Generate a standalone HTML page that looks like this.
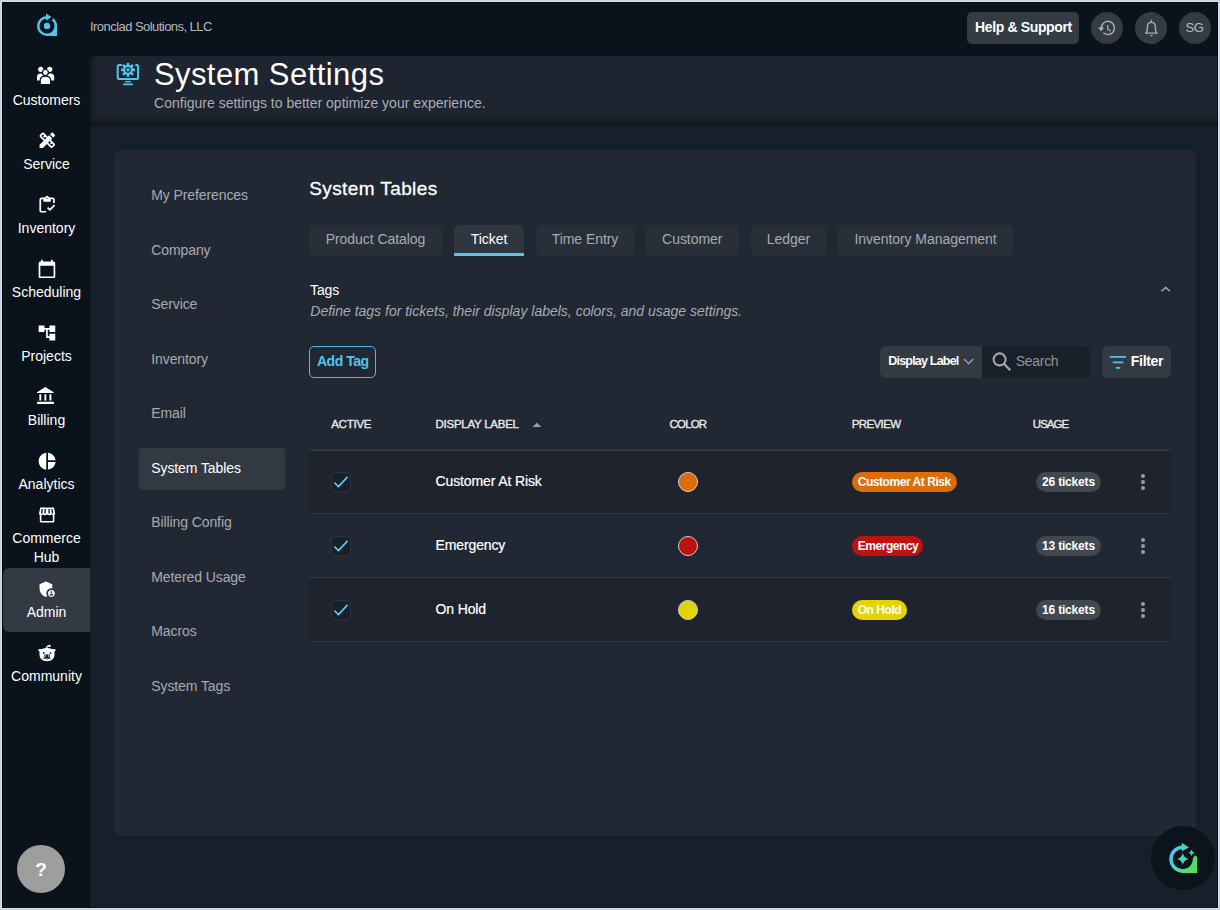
<!DOCTYPE html>
<html><head><meta charset="utf-8">
<style>
*{box-sizing:border-box;margin:0;padding:0}
html,body{width:1220px;height:910px;overflow:hidden;background:#c9d4de;font-family:"Liberation Sans",sans-serif;position:relative}
.abs{position:absolute;display:block}
.t{position:absolute;white-space:nowrap}
</style></head>
<body>
<div class="abs" style="left:1px;top:1px;width:1218px;height:908px;background:#d5dfe8;border-radius:0;"></div>
<div class="abs" style="left:2px;top:2px;width:1216px;height:906px;background:#0a131c;border-radius:0;"></div>
<div class="abs" style="left:90px;top:56px;width:1128px;height:852px;background:#16202a;border-radius:6px 0 0 0;"></div>
<div class="abs" style="left:90px;top:56px;width:1128px;height:70px;background:#1e2430;border-radius:6px 0 0 0;box-shadow:inset 0 -9px 8px -5px rgba(0,0,0,.45), inset 7px 0 7px -5px rgba(0,0,0,.3);"></div>
<div class="abs" style="left:114px;top:150px;width:1082px;height:686px;background:#222833;border-radius:6px;"></div>
<svg class="abs" style="left:30px;top:8px;" width="34" height="34" viewBox="30 8 34 34">
<path d="M47 17.2 A8.8 8.8 0 1 0 55.8 26 A8.8 8.8 0 0 0 52.6 19.3" fill="none" stroke="#4fc6ee" stroke-width="2.5"/>
<path d="M57.05 25.5 L57.05 36 L46.5 36 L46.5 34.6 A8.6 8.6 0 0 0 55.6 25.5Z" fill="#4fc6ee"/>
<circle cx="47" cy="25.9" r="3.2" fill="#4fc6ee"/>
<path d="M46 13.4 L51.6 16.9 L46 20.4Z" fill="#4fc6ee"/>
</svg>
<div class="t" style="left:90px;top:20.20px;font-size:13px;line-height:13px;color:#b4b9bf;letter-spacing:-0.55px;">Ironclad Solutions, LLC</div>
<div class="abs" style="left:967px;top:12px;width:112px;height:32px;background:#353b43;border-radius:5px;"></div>
<div class="t" style="left:975px;top:20.15px;font-size:14px;line-height:14px;color:#fff;font-weight:700;letter-spacing:-0.36px;">Help &amp; Support</div>
<div class="abs" style="left:1091px;top:12px;width:32px;height:32px;background:#353b43;border-radius:50%;"></div>
<div class="abs" style="left:1135px;top:12px;width:32px;height:32px;background:#353b43;border-radius:50%;"></div>
<div class="abs" style="left:1179px;top:12px;width:32px;height:32px;background:#353b43;border-radius:50%;"></div>
<div class="t" style="left:1185.5px;top:21.00px;font-size:13px;line-height:13px;color:#b8bcc2;letter-spacing:-0.3px;">SG</div>
<div class="abs" style="left:3px;top:568px;width:87px;height:64px;background:#333a44;border-radius:6px 0 0 6px;"></div>
<div class="t" style="left:2.5px;width:88px;text-align:center;top:93.15px;font-size:14px;line-height:14px;color:#ffffff;">Customers</div>
<div class="t" style="left:2.5px;width:88px;text-align:center;top:157.15px;font-size:14px;line-height:14px;color:#ffffff;">Service</div>
<div class="t" style="left:2.5px;width:88px;text-align:center;top:221.15px;font-size:14px;line-height:14px;color:#ffffff;">Inventory</div>
<div class="t" style="left:2.5px;width:88px;text-align:center;top:285.15px;font-size:14px;line-height:14px;color:#ffffff;">Scheduling</div>
<div class="t" style="left:2.5px;width:88px;text-align:center;top:349.15px;font-size:14px;line-height:14px;color:#ffffff;">Projects</div>
<div class="t" style="left:2.5px;width:88px;text-align:center;top:413.15px;font-size:14px;line-height:14px;color:#ffffff;">Billing</div>
<div class="t" style="left:2.5px;width:88px;text-align:center;top:477.15px;font-size:14px;line-height:14px;color:#ffffff;">Analytics</div>
<div class="t" style="left:2.5px;width:88px;text-align:center;top:530.95px;font-size:14px;line-height:14px;color:#ffffff;">Commerce</div>
<div class="t" style="left:2.5px;width:88px;text-align:center;top:550.05px;font-size:14px;line-height:14px;color:#ffffff;">Hub</div>
<div class="t" style="left:2.5px;width:88px;text-align:center;top:604.65px;font-size:14px;line-height:14px;color:#ffffff;">Admin</div>
<div class="t" style="left:2.5px;width:88px;text-align:center;top:668.75px;font-size:14px;line-height:14px;color:#ffffff;">Community</div>
<svg class="abs" style="left:30px;top:60px;" width="34" height="30" viewBox="30 60 34 30">
<circle cx="40.7" cy="69.3" r="2.6" fill="#fff"/>
<circle cx="49.7" cy="69.3" r="2.6" fill="#fff"/>
<path d="M37 80.4 V77 Q37 73.8 40.5 73.6 Q42.5 73.6 44 74.6 V80.4Z" fill="#fff"/>
<path d="M54.2 80.4 V77 Q54.2 73.8 50.7 73.6 Q48.7 73.6 47.2 74.6 V80.4Z" fill="#fff"/>
<circle cx="45.4" cy="72.5" r="3.0" fill="#fff" stroke="#0a131c" stroke-width="1.2"/>
<path d="M40.2 84.6 V80.5 Q40.2 76.2 45.4 76.2 Q50.6 76.2 50.6 80.5 V84.6Z" fill="#fff" stroke="#0a131c" stroke-width="1.2"/>
</svg>
<svg class="abs" style="left:0px;top:0px;left:36.72px;top:130.42px;width:20.64px;height:20.64px" width="24" height="24" viewBox="0 0 24 24"><path fill="#fff" d="M16.24 11.51l1.57-1.57-3.75-3.75-1.57 1.57-4.14-4.13c-.78-.78-2.05-.78-2.83 0l-1.9 1.9c-.78.78-.78 2.05 0 2.83l4.13 4.13L3 17.25V21h3.75l4.76-4.76 4.13 4.13c.95.95 2.23.6 2.83 0l1.9-1.9c.78-.78.78-2.05 0-2.83l-4.13-4.13zm-7.06-.44L5.04 6.94l1.89-1.9L8.2 6.31 7.02 7.5l1.41 1.41 1.19-1.19 1.45 1.45-1.89 1.9zm7.88 7.89l-4.13-4.14 1.9-1.9 1.45 1.45-1.19 1.19 1.41 1.41 1.19-1.19 1.27 1.27-1.9 1.91zM20.71 7.04c.39-.39.39-1.02 0-1.41l-2.34-2.34c-.47-.47-1.12-.29-1.41 0l-1.83 1.83 3.75 3.75 1.83-1.83z"/></svg>
<svg class="abs" style="left:30px;top:190px;" width="34" height="30" viewBox="30 190 34 30">
<path d="M46.1 211.75 H41.6 Q40.25 211.75 40.25 210.4 V199.7 Q40.25 198.35 41.6 198.35 H43.5 M50.5 198.35 H52.5 Q53.9 198.35 53.9 199.7 V203" fill="none" stroke="#fff" stroke-width="1.7"/>
<path d="M43.2 198.3 Q43.2 197.3 44.2 197.3 H45.3 Q45.6 195.7 47.05 195.7 Q48.5 195.7 48.8 197.3 H49.9 Q50.9 197.3 50.9 198.3 V200.8 Q50.9 201.8 49.9 201.8 H44.2 Q43.2 201.8 43.2 200.8 Z" fill="#fff"/>
<circle cx="47.05" cy="198.3" r="0.65" fill="#0a121b"/>
<path d="M47.6 207.6 L49.9 209.9 L54.6 205.2" fill="none" stroke="#fff" stroke-width="1.7"/>
</svg>
<svg class="abs" style="left:0px;top:0px;left:37.04px;top:258.87px;width:19.92px;height:19.92px" width="24" height="24" viewBox="0 0 24 24"><path fill="#fff" d="M20 3h-1V1h-2v2H7V1H5v2H4c-1.1 0-2 .9-2 2v16c0 1.1.9 2 2 2h16c1.1 0 2-.9 2-2V5c0-1.1-.9-2-2-2zm0 18H4V8h16v13z"/></svg>
<svg class="abs" style="left:0px;top:0px;left:37.04px;top:322.8px;width:19.92px;height:19.92px" width="24" height="24" viewBox="0 0 24 24"><path fill="#fff" d="M22 11V3h-7v3H9V3H2v8h7V8h2v10h4v3h7v-8h-7v3h-2V8h2v3z"/></svg>
<svg class="abs" style="left:30px;top:380px;" width="34" height="30" viewBox="30 380 34 30">
<path d="M45.35 386.9 L37 392.2 Q36.8 393.1 37.6 393.1 H53.1 Q53.9 393.1 53.7 392.2Z" fill="#fff"/>
<rect x="39.35" y="394.3" width="1.9" height="6.2" fill="#fff"/>
<rect x="44.4" y="394.3" width="1.9" height="6.2" fill="#fff"/>
<rect x="49.45" y="394.3" width="1.9" height="6.2" fill="#fff"/>
<rect x="37" y="401.8" width="17" height="2.3" rx="0.5" fill="#fff"/>
</svg>
<svg class="abs" style="left:0px;top:0px;left:36.81px;top:450.81px;width:20.28px;height:20.28px" width="24" height="24" viewBox="0 0 24 24"><path fill="#fff" d="M11 2v20c-5.07-.5-9-4.79-9-10s3.93-9.5 9-10zm2.03 0v8.99H22c-.47-4.74-4.24-8.52-8.97-8.99zm0 11.01V22c4.74-.47 8.5-4.25 8.97-8.99h-8.97z"/></svg>
<svg class="abs" style="left:30px;top:500px;" width="34" height="30" viewBox="30 500 34 30">
<path d="M40.6 514.8 V521 Q40.6 521.7 41.3 521.7 H52.9 Q53.6 521.7 53.6 521 V514.8" fill="none" stroke="#fff" stroke-width="1.6"/>
<path d="M40.2 507.5 H54 L55.1 513.8 Q55.1 515.2 53.6 515.2 Q52.3 515.2 51.5 514.4 Q50.6 515.2 49.3 515.2 Q48 515.2 47.1 514.4 Q46.2 515.2 44.9 515.2 Q43.6 515.2 42.7 514.4 Q41.9 515.2 40.6 515.2 Q39 515.2 39 513.8 Z" fill="#fff"/>
<path d="M41.6 509 L42.8 509 L42.4 513.6 L41 513.6Z M44.6 509 L45.8 509 L45.6 513.6 L44.2 513.6Z M48.3 509 L49.5 509 L49.9 513.6 L48.5 513.6Z M51.4 509 L52.6 509 L53.2 513.6 L51.8 513.6Z" fill="#0a121b"/>
</svg>
<svg class="abs" style="left:0px;top:0px;left:36.75px;top:578.65px;width:20.4px;height:20.4px" width="24" height="24" viewBox="0 0 24 24"><path fill="#fff" d="M17 11c.34 0 .67.04 1 .09V6.27L10.5 3 3 6.27v4.91c0 4.54 3.2 8.79 7.5 9.82.55-.13 1.08-.32 1.6-.55-.69-.98-1.1-2.17-1.1-3.45 0-3.31 2.69-6 6-6z"/><path fill="#fff" d="M17 13c-2.21 0-4 1.79-4 4s1.79 4 4 4 4-1.79 4-4-1.79-4-4-4zm0 1.38c.62 0 1.12.51 1.12 1.12s-.51 1.12-1.12 1.12-1.12-.51-1.12-1.12.5-1.12 1.12-1.12zm0 5.37c-.93 0-1.74-.46-2.24-1.17.05-.72 1.51-1.08 2.24-1.08s2.19.36 2.24 1.08c-.5.71-1.31 1.17-2.24 1.17z"/></svg>
<svg class="abs" style="left:30px;top:640px;" width="34" height="26" viewBox="30 640 34 26">
<path d="M38 649.7 Q39.5 648.8 41.5 649.3 Q44 648 47 648 Q50 648 52.5 649.3 Q54.5 648.8 55.9 649.7 Q55.3 651.3 54.3 652 Q54.6 653 54.6 654 Q54.6 661.3 47 661.3 Q39.4 661.3 39.4 654 Q39.4 653 39.7 652 Q38.7 651.3 38 649.7Z" fill="#fff"/>
<path d="M46.2 648.5 Q47 645.6 49.6 645.6" fill="none" stroke="#fff" stroke-width="1.2"/>
<circle cx="49.6" cy="645.9" r="1.1" fill="#fff"/>
<rect x="42.9" y="652.2" width="1.6" height="1.6" fill="#0a121b"/>
<rect x="49.7" y="652.2" width="1.6" height="1.6" fill="#0a121b"/>
<path d="M44.3 654.6 H49.8 V657.4 Q47 658.4 44.3 657.4Z" fill="#0a121b"/>
<rect x="45.2" y="655.2" width="0.9" height="1.5" fill="#fff"/>
<rect x="48.0" y="655.2" width="0.9" height="1.5" fill="#fff"/>
<path d="M43.2 658 Q47 660 50.8 658" fill="none" stroke="#0a121b" stroke-width="0.8"/>
</svg>
<div class="abs" style="left:17px;top:845px;width:48px;height:48px;background:#9e9e9e;border-radius:50%;"></div>
<div class="t" style="left:17.0px;width:48px;text-align:center;top:860.12px;font-size:19px;line-height:19px;color:#fff;font-weight:700;">?</div>
<svg class="abs" style="left:110px;top:56px;" width="36" height="36" viewBox="110 56 36 36">
<path d="M121.9 65.1 H119.2 Q117.7 65.1 117.7 66.6 V77.5 Q117.7 79 119.2 79 H136.6 Q138.1 79 138.1 77.5 V66.6 Q138.1 65.1 136.6 65.1 H135.3" fill="none" stroke="#4fc6ee" stroke-width="2"/>
<rect x="125.2" y="81" width="5.5" height="1.5" fill="#4fc6ee"/>
<rect x="123" y="83.5" width="10.1" height="1.7" rx="0.8" fill="#4fc6ee"/>
<g transform="translate(128 69.85)">
<circle r="5.1" fill="#4fc6ee"/><rect x="-1.25" y="-7" width="2.5" height="3" transform="rotate(0)" fill="#4fc6ee"/><rect x="-1.25" y="-7" width="2.5" height="3" transform="rotate(45)" fill="#4fc6ee"/><rect x="-1.25" y="-7" width="2.5" height="3" transform="rotate(90)" fill="#4fc6ee"/><rect x="-1.25" y="-7" width="2.5" height="3" transform="rotate(135)" fill="#4fc6ee"/><rect x="-1.25" y="-7" width="2.5" height="3" transform="rotate(180)" fill="#4fc6ee"/><rect x="-1.25" y="-7" width="2.5" height="3" transform="rotate(225)" fill="#4fc6ee"/><rect x="-1.25" y="-7" width="2.5" height="3" transform="rotate(270)" fill="#4fc6ee"/><rect x="-1.25" y="-7" width="2.5" height="3" transform="rotate(315)" fill="#4fc6ee"/>
<circle r="2.9" fill="#1e232d"/>
<circle r="1.7" fill="#4fc6ee"/>
</g>
</svg>
<div class="t" style="left:153.9px;top:58.76px;font-size:31px;line-height:31px;color:#fff;letter-spacing:0.43px;">System Settings</div>
<div class="t" style="left:154.1px;top:95.75px;font-size:14px;line-height:14px;color:#a9aeb4;">Configure settings to better optimize your experience.</div>
<div class="abs" style="left:139px;top:448px;width:146px;height:42px;background:#333942;border-radius:4px;"></div>
<div class="t" style="left:151.3px;top:188.15px;font-size:14px;line-height:14px;color:#a6abb2;letter-spacing:-0.1px;">My Preferences</div>
<div class="t" style="left:151.3px;top:242.65px;font-size:14px;line-height:14px;color:#a6abb2;letter-spacing:-0.1px;">Company</div>
<div class="t" style="left:151.3px;top:297.15px;font-size:14px;line-height:14px;color:#a6abb2;letter-spacing:-0.1px;">Service</div>
<div class="t" style="left:151.3px;top:351.65px;font-size:14px;line-height:14px;color:#a6abb2;letter-spacing:-0.1px;">Inventory</div>
<div class="t" style="left:151.3px;top:406.15px;font-size:14px;line-height:14px;color:#a6abb2;letter-spacing:-0.1px;">Email</div>
<div class="t" style="left:151.3px;top:460.65px;font-size:14px;line-height:14px;color:#fff;letter-spacing:-0.1px;">System Tables</div>
<div class="t" style="left:151.3px;top:515.15px;font-size:14px;line-height:14px;color:#a6abb2;letter-spacing:-0.1px;">Billing Config</div>
<div class="t" style="left:151.3px;top:569.65px;font-size:14px;line-height:14px;color:#a6abb2;letter-spacing:-0.1px;">Metered Usage</div>
<div class="t" style="left:151.3px;top:624.15px;font-size:14px;line-height:14px;color:#a6abb2;letter-spacing:-0.1px;">Macros</div>
<div class="t" style="left:151.3px;top:678.65px;font-size:14px;line-height:14px;color:#a6abb2;letter-spacing:-0.1px;">System Tags</div>
<div class="t" style="left:309.2px;top:178.62px;font-size:19px;line-height:19px;color:#fff;letter-spacing:0.4px;-webkit-text-stroke:0.3px #fff;">System Tables</div>
<div class="abs" style="left:309px;top:225px;width:133px;height:31px;background:#292f39;border-radius:6px;"></div>
<div class="t" style="left:299.0px;width:153px;text-align:center;top:231.95px;font-size:14px;line-height:14px;color:#a6abb2;letter-spacing:-0.05px;">Product Catalog</div>
<div class="abs" style="left:454px;top:225px;width:70px;height:31px;background:#30363f;border-radius:6px 6px 0 0;"></div>
<div class="abs" style="left:454px;top:253px;width:70px;height:3px;background:#4fc6ee;border-radius:0;"></div>
<div class="t" style="left:444.0px;width:90px;text-align:center;top:231.95px;font-size:14px;line-height:14px;color:#fff;letter-spacing:-0.05px;">Ticket</div>
<div class="abs" style="left:536px;top:225px;width:98px;height:31px;background:#292f39;border-radius:6px;"></div>
<div class="t" style="left:526.0px;width:118px;text-align:center;top:231.95px;font-size:14px;line-height:14px;color:#a6abb2;letter-spacing:-0.05px;">Time Entry</div>
<div class="abs" style="left:646px;top:225px;width:92.5px;height:31px;background:#292f39;border-radius:6px;"></div>
<div class="t" style="left:636.0px;width:112.5px;text-align:center;top:231.95px;font-size:14px;line-height:14px;color:#a6abb2;letter-spacing:-0.05px;">Customer</div>
<div class="abs" style="left:751px;top:225px;width:75px;height:31px;background:#292f39;border-radius:6px;"></div>
<div class="t" style="left:741.0px;width:95px;text-align:center;top:231.95px;font-size:14px;line-height:14px;color:#a6abb2;letter-spacing:-0.05px;">Ledger</div>
<div class="abs" style="left:838px;top:225px;width:175px;height:31px;background:#292f39;border-radius:6px;"></div>
<div class="t" style="left:828.0px;width:195px;text-align:center;top:231.95px;font-size:14px;line-height:14px;color:#a6abb2;letter-spacing:-0.05px;">Inventory Management</div>
<div class="t" style="left:310px;top:283.15px;font-size:14px;line-height:14px;color:#fff;letter-spacing:-0.1px;">Tags</div>
<div class="t" style="left:310.3px;top:303.85px;font-size:14px;line-height:14px;color:#a6abb2;font-style:italic;">Define tags for tickets, their display labels, colors, and usage settings.</div>
<svg class="abs" style="left:1155px;top:282px;" width="20" height="14" viewBox="1155 282 20 14"><path d="M1161.4 291.3 L1165.7 287.6 L1170 291.3" fill="none" stroke="#a3a7ac" stroke-width="1.5"/></svg>
<div class="abs" style="left:309px;top:346px;width:67px;height:32px;background:transparent;border-radius:5px;border:1px solid #48bde3;"></div>
<div class="t" style="left:316.9px;top:354.15px;font-size:14px;line-height:14px;color:#4fc6ee;font-weight:700;letter-spacing:-0.45px;">Add Tag</div>
<div class="abs" style="left:880px;top:346px;width:102px;height:32px;background:#343a43;border-radius:6px 0 0 6px;"></div>
<div class="t" style="left:888.3px;top:354.82px;font-size:12.5px;line-height:12.5px;color:#fff;font-weight:700;letter-spacing:-0.8px;">Display Label</div>
<svg class="abs" style="left:960px;top:354px;" width="18" height="14" viewBox="960 354 18 14"><path d="M964 359 L968.6 363.6 L973.2 359" fill="none" stroke="#a3a7ac" stroke-width="1.3"/></svg>
<div class="abs" style="left:982px;top:346px;width:108px;height:32px;background:#19202a;border-radius:0 6px 6px 0;"></div>
<svg class="abs" style="left:986px;top:348px;" width="28" height="28" viewBox="986 348 28 28"><circle cx="999.6" cy="359.4" r="6" fill="none" stroke="#a3a7ac" stroke-width="2.1"/><path d="M1004 363.8 L1010.2 370.2" stroke="#a3a7ac" stroke-width="2.3"/></svg>
<div class="t" style="left:1015.8px;top:354.15px;font-size:14px;line-height:14px;color:#8f949a;letter-spacing:-0.3px;">Search</div>
<div class="abs" style="left:1102px;top:346px;width:69px;height:32px;background:#343a43;border-radius:6px;"></div>
<svg class="abs" style="left:1106px;top:350px;" width="24" height="24" viewBox="1106 350 24 24"><path d="M1109.8 356.9 H1126.1 M1112.7 362.4 H1123.2 M1116 367.9 H1120.1" stroke="#4fc6ee" stroke-width="1.9"/></svg>
<div class="t" style="left:1130.8px;top:354.15px;font-size:14px;line-height:14px;color:#fff;font-weight:700;letter-spacing:-0.3px;">Filter</div>
<div class="t" style="left:331.2px;top:419.37px;font-size:11.5px;line-height:11.5px;color:#e8eaec;letter-spacing:-0.25px;-webkit-text-stroke:0.35px #e8eaec;">ACTIVE</div>
<div class="t" style="left:435.5px;top:419.37px;font-size:11.5px;line-height:11.5px;color:#e8eaec;letter-spacing:-0.25px;-webkit-text-stroke:0.35px #e8eaec;">DISPLAY LABEL</div>
<div class="t" style="left:669.6px;top:419.37px;font-size:11.5px;line-height:11.5px;color:#e8eaec;letter-spacing:-0.85px;-webkit-text-stroke:0.35px #e8eaec;">COLOR</div>
<div class="t" style="left:851.7px;top:419.37px;font-size:11.5px;line-height:11.5px;color:#e8eaec;letter-spacing:-0.6px;-webkit-text-stroke:0.35px #e8eaec;">PREVIEW</div>
<div class="t" style="left:1032.8px;top:419.37px;font-size:11.5px;line-height:11.5px;color:#e8eaec;letter-spacing:-0.95px;-webkit-text-stroke:0.35px #e8eaec;">USAGE</div>
<svg class="abs" style="left:528px;top:418px;" width="18" height="14" viewBox="528 418 18 14"><path d="M532.5 427.1 L536.9 422.8 L541.3 427.1Z" fill="#9ea2a7"/></svg>
<div class="abs" style="left:309px;top:449px;width:862px;height:2px;background:#30363f;border-radius:0;"></div>
<div class="abs" style="left:309px;top:451px;width:862px;height:63px;background:#1e232d;border-radius:0;"></div>
<div class="abs" style="left:309px;top:513px;width:862px;height:1px;background:#30363f;border-radius:0;"></div>
<div class="abs" style="left:331px;top:472px;width:20px;height:20px;background:#19202a;border-radius:3px;border:1px solid #2b323b;"></div>
<svg class="abs" style="left:328px;top:469px;" width="26" height="26" viewBox="328 469 26 26"><path d="M334.4 482.5 L338.4 486.5 L347.6 476.9" fill="none" stroke="#56cff4" stroke-width="1.7"/></svg>
<div class="t" style="left:435.5px;top:474.15px;font-size:14px;line-height:14px;color:#fff;letter-spacing:-0.12px;-webkit-text-stroke:0.2px #fff;">Customer At Risk</div>
<div class="abs" style="left:678px;top:472px;width:20px;height:20px;background:#dc6d0a;border-radius:50%;border:1px solid #cfcfcf;"></div>
<div class="abs" style="left:852px;top:472px;width:105px;height:20px;background:#dc6d0a;border-radius:10px;"></div>
<div class="t" style="left:857.7px;top:476.04px;font-size:12px;line-height:12px;color:#fff;font-weight:700;letter-spacing:-0.45px;">Customer At Risk</div>
<div class="abs" style="left:1036px;top:472px;width:65px;height:20px;background:#424852;border-radius:10px;"></div>
<div class="t" style="left:1042px;top:476.04px;font-size:12px;line-height:12px;color:#fff;font-weight:700;letter-spacing:-0.18px;">26 tickets</div>
<div class="abs" style="left:1141px;top:474px;width:4.2px;height:4.2px;background:#9a9ea4;border-radius:50%;"></div>
<div class="abs" style="left:1141px;top:480px;width:4.2px;height:4.2px;background:#9a9ea4;border-radius:50%;"></div>
<div class="abs" style="left:1141px;top:486px;width:4.2px;height:4.2px;background:#9a9ea4;border-radius:50%;"></div>
<div class="abs" style="left:309px;top:577px;width:862px;height:1px;background:#30363f;border-radius:0;"></div>
<div class="abs" style="left:331px;top:536px;width:20px;height:20px;background:#19202a;border-radius:3px;border:1px solid #2b323b;"></div>
<svg class="abs" style="left:328px;top:533px;" width="26" height="26" viewBox="328 533 26 26"><path d="M334.4 546.5 L338.4 550.5 L347.6 540.9" fill="none" stroke="#56cff4" stroke-width="1.7"/></svg>
<div class="t" style="left:435.5px;top:538.15px;font-size:14px;line-height:14px;color:#fff;letter-spacing:-0.12px;-webkit-text-stroke:0.2px #fff;">Emergency</div>
<div class="abs" style="left:678px;top:536px;width:20px;height:20px;background:#be1111;border-radius:50%;border:1px solid #cfcfcf;"></div>
<div class="abs" style="left:852px;top:536px;width:71px;height:20px;background:#be1111;border-radius:10px;"></div>
<div class="t" style="left:857.7px;top:540.04px;font-size:12px;line-height:12px;color:#fff;font-weight:700;letter-spacing:-0.45px;">Emergency</div>
<div class="abs" style="left:1036px;top:536px;width:65px;height:20px;background:#424852;border-radius:10px;"></div>
<div class="t" style="left:1042px;top:540.04px;font-size:12px;line-height:12px;color:#fff;font-weight:700;letter-spacing:-0.18px;">13 tickets</div>
<div class="abs" style="left:1141px;top:538px;width:4.2px;height:4.2px;background:#9a9ea4;border-radius:50%;"></div>
<div class="abs" style="left:1141px;top:544px;width:4.2px;height:4.2px;background:#9a9ea4;border-radius:50%;"></div>
<div class="abs" style="left:1141px;top:550px;width:4.2px;height:4.2px;background:#9a9ea4;border-radius:50%;"></div>
<div class="abs" style="left:309px;top:579px;width:862px;height:63px;background:#1e232d;border-radius:0;"></div>
<div class="abs" style="left:309px;top:641px;width:862px;height:1px;background:#30363f;border-radius:0;"></div>
<div class="abs" style="left:331px;top:600px;width:20px;height:20px;background:#19202a;border-radius:3px;border:1px solid #2b323b;"></div>
<svg class="abs" style="left:328px;top:597px;" width="26" height="26" viewBox="328 597 26 26"><path d="M334.4 610.5 L338.4 614.5 L347.6 604.9" fill="none" stroke="#56cff4" stroke-width="1.7"/></svg>
<div class="t" style="left:435.5px;top:602.15px;font-size:14px;line-height:14px;color:#fff;letter-spacing:-0.12px;-webkit-text-stroke:0.2px #fff;">On Hold</div>
<div class="abs" style="left:678px;top:600px;width:20px;height:20px;background:#e3d300;border-radius:50%;border:1px solid #cfcfcf;"></div>
<div class="abs" style="left:852px;top:600px;width:55px;height:20px;background:#e3d300;border-radius:10px;"></div>
<div class="t" style="left:857.7px;top:604.04px;font-size:12px;line-height:12px;color:#fff;font-weight:700;letter-spacing:-0.45px;">On Hold</div>
<div class="abs" style="left:1036px;top:600px;width:65px;height:20px;background:#424852;border-radius:10px;"></div>
<div class="t" style="left:1042px;top:604.04px;font-size:12px;line-height:12px;color:#fff;font-weight:700;letter-spacing:-0.18px;">16 tickets</div>
<div class="abs" style="left:1141px;top:602px;width:4.2px;height:4.2px;background:#9a9ea4;border-radius:50%;"></div>
<div class="abs" style="left:1141px;top:608px;width:4.2px;height:4.2px;background:#9a9ea4;border-radius:50%;"></div>
<div class="abs" style="left:1141px;top:614px;width:4.2px;height:4.2px;background:#9a9ea4;border-radius:50%;"></div>
<div class="abs" style="left:1151px;top:826px;width:64px;height:64px;background:#0b131c;border-radius:50%;"></div>
<svg class="abs" style="left:1160px;top:836px;" width="44" height="44" viewBox="1160 836 44 44">
<defs><linearGradient id="ag" gradientUnits="userSpaceOnUse" x1="1170" y1="856" x2="1197" y2="868"><stop offset="0" stop-color="#4cc6ee"/><stop offset="1" stop-color="#4fe34e"/></linearGradient></defs>
<path d="M1182.8 847.25 A11.85 11.85 0 0 0 1182.8 870.95" fill="none" stroke="url(#ag)" stroke-width="3.5"/>
<path d="M1195.3 855.6 Q1197.1 855.8 1197.1 857.8 V872.95 H1181.3 V869.2 L1182.8 869.2 A10.1 10.1 0 0 0 1192.9 859.1 Q1193 856.6 1195.3 855.6Z" fill="url(#ag)"/>
<path d="M1181.9 842.8 L1188.9 847.5 L1181.9 851.2Z" fill="url(#ag)"/>
<path d="M1182.8 853.1 Q1183.8799999999999 858.02 1188.8 859.1 Q1183.8799999999999 860.1800000000001 1182.8 865.1 Q1181.72 860.1800000000001 1176.8 859.1 Q1181.72 858.02 1182.8 853.1Z" fill="url(#ag)"/>
<path d="M1191.6 849.4000000000001 Q1192.194 852.106 1194.8999999999999 852.7 Q1192.194 853.2940000000001 1191.6 856.0 Q1191.0059999999999 853.2940000000001 1188.3 852.7 Q1191.0059999999999 852.106 1191.6 849.4000000000001Z" fill="url(#ag)"/>
</svg>
<svg class="abs" style="left:1090px;top:12px;" width="36" height="32" viewBox="1090 12 36 32">
<path d="M1101.3 27.9 A6.6 6.6 0 1 1 1103.4 32.8" fill="none" stroke="#a9acb0" stroke-width="1.5"/>
<path d="M1098 27.6 L1104.2 27.6 L1101.1 31.2Z" fill="#a9acb0"/>
<path d="M1107.7 25 V29.1 L1110.7 31" fill="none" stroke="#a9acb0" stroke-width="1.3"/>
</svg>
<svg class="abs" style="left:1136px;top:12px;" width="32" height="32" viewBox="1136 12 32 32">
<path d="M1145.7 33.1 Q1147.4 31.6 1147.4 29.3 V26.8 Q1147.4 22.4 1151.4 22.4 Q1155.4 22.4 1155.4 26.8 V29.3 Q1155.4 31.6 1157.1 33.1 Z" fill="none" stroke="#a9acb0" stroke-width="1.4" stroke-linejoin="round"/>
<path d="M1151.4 19.8 V22.4" stroke="#a9acb0" stroke-width="1.3"/>
<rect x="1150.3" y="35" width="2.2" height="1.3" fill="#a9acb0"/>
</svg>
<div class="abs" style="left:2px;top:2px;width:1216px;height:906px;background:transparent;border-radius:0;border:1px solid rgba(0,0,0,.4);"></div>
</body></html>
